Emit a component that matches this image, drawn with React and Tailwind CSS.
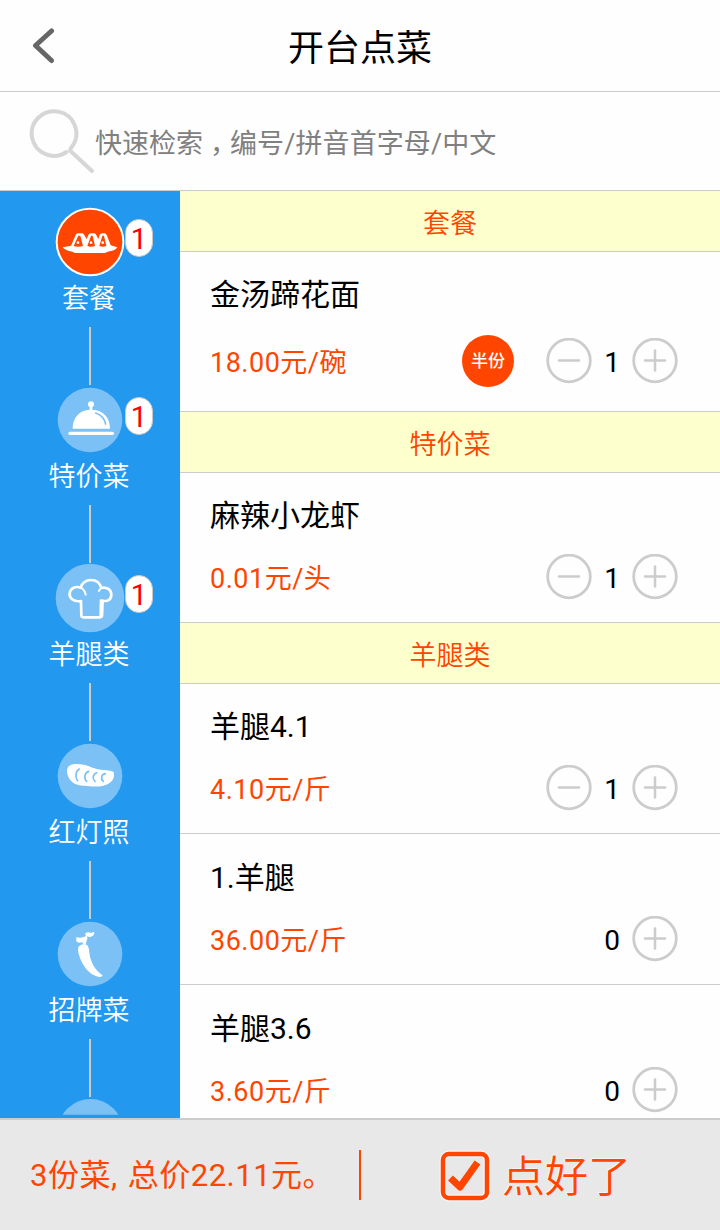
import { useState } from "react";
import clsx from "clsx";

const CATEGORIES = [
  { name: "套餐", icon: DumplingIcon, count: 1 },
  { name: "特价菜", icon: ClocheIcon, count: 1 },
  { name: "羊腿类", icon: ChefHatIcon, count: 1 },
  { name: "红灯照", icon: BreadIcon, count: 0 },
  { name: "招牌菜", icon: ChiliIcon, count: 0 },
];

const SECTIONS = [
  { title: "套餐", dishes: [{ id: 1, name: "金汤蹄花面", price: "18.00元/碗", half: true }] },
  { title: "特价菜", dishes: [{ id: 2, name: "麻辣小龙虾", price: "0.01元/头" }] },
  {
    title: "羊腿类",
    dishes: [
      { id: 3, name: "羊腿4.1", price: "4.10元/斤" },
      { id: 4, name: "1.羊腿", price: "36.00元/斤" },
      { id: 5, name: "羊腿3.6", price: "3.60元/斤" },
    ],
  },
];

function Disc({ children }) {
  return (
    <svg viewBox="0 0 210 210" className="block size-[70px]">
      <circle cx="105" cy="105" r="97" fill="#7bc1f5" />
      {children}
    </svg>
  );
}

function DumplingIcon() {
  return (
    <svg viewBox="0 0 210 210" className="block size-[70px]">
      <circle cx="105" cy="105" r="100" fill="#ff4500" stroke="#fff" strokeWidth="6" />
      <path
        d="M23 121 L48 116 L62 84 Q64 79 69 79 L82 79 Q87 80 89 86 L95 96 L100 84 Q102 79 108 79 L118 79 Q123 80 125 86 L130 96 L134 84 Q136 79 142 79 L149 79 Q154 80 156 86 L167 115 L187 121 Q180 132 158 134 L150 138 L60 138 L52 134 Q30 131 23 121 Z"
        fill="#fff"
      />
      <path d="M70 86 L56 117 Q68 121 84 117 L76 86 Z M108 86 L97 117 Q107 121 120 117 L113 86 Z M142 86 L133 117 Q143 121 154 117 L147 86 Z" fill="#ff4500" />
      <circle cx="69" cy="107" r="4" fill="#fff" />
      <circle cx="108" cy="107" r="4" fill="#fff" />
      <circle cx="143" cy="107" r="4" fill="#fff" />
    </svg>
  );
}

function ClocheIcon() {
  return (
    <Disc>
      <path d="M53 131 C53 96 74 76 104 74 L104 64 L112 64 L112 74 C144 76 165 96 165 131 Z" fill="#fff" />
      <circle cx="108" cy="58" r="9" fill="#fff" />
      <path d="M45 145 H172" stroke="#fff" strokeWidth="10" strokeLinecap="round" />
      <path d="M122 84 Q146 92 152 117" fill="none" stroke="#7bc1f5" strokeWidth="5" strokeLinecap="round" />
    </Disc>
  );
}

function ChefHatIcon() {
  return (
    <svg viewBox="0 0 210 210" className="block size-[70px]">
      <circle cx="105" cy="105" r="103" fill="#7bc1f5" />
      <g fill="none" stroke="#fff" strokeLinecap="round" strokeLinejoin="round">
        <path
          d="M78 114 C54 118 42 104 44 90 C47 74 62 69 77 74 C83 56 94 51 108 51 C124 51 135 60 139 75 C155 71 169 80 169 95 C169 109 158 117 143 113 L141 157 Q141 163 134 163 L86 163 Q79 163 79 157 Z"
          strokeWidth="8"
        />
        <path d="M77 74 Q89 80 92 95 M139 75 Q133 79 132 84 M143 113 L137 112 L136 158" strokeWidth="6" />
      </g>
    </svg>
  );
}

function BreadIcon() {
  return (
    <Disc>
      <path
        d="M36 88 C37 75 48 68 66 69 C90 69 105 78 126 84 C145 89 165 86 176 93 C179 105 176 117 165 125 C151 136 128 138 104 136 C82 135 60 133 49 121 C40 112 35 99 36 88 Z"
        fill="#fff"
      />
      <g fill="none" stroke="#7bc1f5" strokeWidth="5" strokeLinecap="round">
        <path d="M73 84 C61 90 60 109 68 119" />
        <path d="M101 91 C88 95 86 113 95 121" />
        <path d="M125 95 C113 99 111 113 120 121" />
        <path d="M151 98 C139 100 136 114 145 121" />
      </g>
    </Disc>
  );
}

function ChiliIcon() {
  return (
    <Disc>
      <path d="M70 84 C75 76 91 72 98 80 C105 92 101 105 109 125 C116 145 127 157 142 168 Q144 173 134 174 C114 171 96 158 82 132 C74 116 67 98 70 84 Z" fill="#fff" />
      <path d="M64 54 Q74 59 88 53 L93 51 L90 44 Q99 37 107 42 L118 38 Q119 50 108 53 Q101 55 97 51 L97 60 Q94 64 93 75 L83 77 Q85 71 82 70 Q67 73 64 67 Z" fill="#fff" />
    </Disc>
  );
}

function Sidebar() {
  return (
    <nav className="relative w-[180px] shrink-0 overflow-hidden bg-[#2398ef] pt-4">
      {CATEGORIES.map(({ name, icon: Icon, count }) => (
        <div key={name} className="relative flex h-[178px] flex-col items-center">
          <Icon />
          <div className="flex h-[42px] items-center pt-0.5 pr-0.5 text-[27px] font-[350] text-white">{name}</div>
          <div className="mt-2 h-[58px] w-0.5 bg-[#ccc]" />
          {count > 0 && (
            <span className="absolute top-3 left-[125px] flex h-[38px] w-7 items-center justify-center rounded-[14px] border border-[#c9c9c9] bg-white pt-[3px] text-[29px] leading-none text-[#f00]">
              {count}
            </span>
          )}
        </div>
      ))}
      <div className="flex h-[18px] justify-center overflow-hidden">
        <div className="mt-0.5 size-[65px] shrink-0 rounded-full bg-linear-to-b from-[#7bc1f5] from-22% to-[#2398ef] to-29%" />
      </div>
    </nav>
  );
}

function RoundButton({ plus, onClick }) {
  return (
    <button type="button" onClick={onClick} className="size-[46px] shrink-0">
      <svg viewBox="0 0 46 46" fill="none" stroke="#ccc" strokeWidth="2.5" strokeLinecap="round" className="block">
        <circle cx="23" cy="22.5" r="21.3" strokeWidth="2.8" />
        <path d="M13 22.5 H33" />
        {plus && <path d="M23 12.5 V32.5" />}
      </svg>
    </button>
  );
}

function Dish({ dish, count, onChange, className }) {
  return (
    <li className={clsx("border-b border-[#ccc] pr-[42px] pl-[30px]", className)}>
      <div className="pt-px text-[30px] leading-[39px] text-black">{dish.name}</div>
      <div className={clsx("flex h-[52px] items-center", dish.half ? "mt-[21px]" : "mt-4")}>
        <span className="flex-1 pt-[5px] text-[27px] tracking-[0.5px] text-[#ff4500]">{dish.price}</span>
        {dish.half && (
          <span className="mr-8 flex size-[52px] items-center justify-center rounded-full bg-[#ff4500] pt-0.5 text-[17px] font-medium text-white">
            半份
          </span>
        )}
        {count > 0 && <RoundButton onClick={() => onChange(-1)} />}
        <span className="w-10 pt-[3px] text-center text-[28px]">{count}</span>
        <RoundButton plus onClick={() => onChange(1)} />
      </div>
    </li>
  );
}

export default function App() {
  const [counts, setCounts] = useState({ 1: 1, 2: 1, 3: 1, 4: 0, 5: 0 });

  function change(id, delta) {
    setCounts((prev) => ({ ...prev, [id]: Math.max(0, prev[id] + delta) }));
  }

  return (
    <div className="flex h-[1230px] w-[720px] flex-col overflow-hidden bg-[#fefefe] font-[Roboto,'Noto_Sans_CJK_SC',sans-serif] text-black">
      <header className="grid h-[92px] shrink-0 grid-cols-[90px_1fr_90px] items-center border-b border-[#ccc]">
        <svg width="24" height="36" viewBox="0 0 24 36" fill="none" className="ml-8">
          <path d="M19.5 3 L3.5 17.5 L19.5 32.5" stroke="#666" strokeWidth="5" strokeLinecap="round" strokeLinejoin="round" />
        </svg>
        <h1 className="pt-1.5 text-center text-4xl">开台点菜</h1>
      </header>

      <div className="flex h-[99px] shrink-0 items-center border-b border-[#ccc] pl-[29px]">
        <svg width="66" height="66" viewBox="0 0 66 66" fill="none" stroke="#d6d6d6" strokeWidth="4">
          <path d="M37.5 44 A22.3 22.3 0 1 1 43.5 38 Q40 41.5 42 43.5 L63 63" strokeLinecap="round" />
        </svg>
        <span className="flex pt-1.5 text-[27px] text-[#808080]">
          <span>快速检索</span>
          {/* half-width comma, centred in a full-width cell */}
          <span className="w-[27px] pl-[7px] [font-feature-settings:'halt']">，</span>
          <span className="tracking-[0.1px]">编号/拼音首字母/中文</span>
        </span>
      </div>

      <main className="flex min-h-0 flex-1">
        <Sidebar />
        <div className="flex-1 overflow-hidden">
          {SECTIONS.map((section) => (
            <section key={section.title}>
              <h2 className="flex h-[61px] items-center justify-center border-b border-[#ccc] bg-[#fdffcc] pt-[7px] text-[27px] font-[350] text-[#ff4500]">
                {section.title}
              </h2>
              <ul>
                {section.dishes.map((dish, i) => (
                  <Dish
                    key={dish.id}
                    dish={dish}
                    count={counts[dish.id]}
                    onChange={(delta) => change(dish.id, delta)}
                    className={dish.half ? "h-40 pt-[22px]" : i === 0 ? "h-[150px] pt-[22px]" : "h-[151px] pt-[23px]"}
                  />
                ))}
              </ul>
            </section>
          ))}
        </div>
      </main>

      <footer className="flex h-28 shrink-0 items-center border-t-2 border-[#ccc] bg-[#e8e8e8] text-[#ff4500]">
        <div className="w-[359px] pt-0.5 pl-[30px] text-[31px] tracking-[0.5px] whitespace-nowrap [word-spacing:2px]">
          3份菜, 总价22.11元。
        </div>
        <div className="h-[50px] w-0.5 bg-[#ff4500]" />
        <button type="button" className="ml-[78px] flex items-center">
          <svg width="52" height="52" viewBox="0 0 52 52" fill="none" className="mt-0.5">
            <rect x="4" y="4" width="44" height="44" rx="6" stroke="#fff" strokeWidth="7" opacity="0.6" />
            <rect x="4" y="4" width="44" height="44" rx="6" stroke="#ff4500" strokeWidth="4.5" />
            <path d="M11.5 28 L21 37 L38.5 12.5" stroke="#ff4500" strokeWidth="7" strokeLinejoin="round" />
          </svg>
          <span className="ml-[11px] pt-[5px] text-[43px] leading-none font-[350] [text-shadow:-1px_-1px_1px_rgba(255,255,255,0.6)]">
            点好了
          </span>
        </button>
      </footer>
    </div>
  );
}
